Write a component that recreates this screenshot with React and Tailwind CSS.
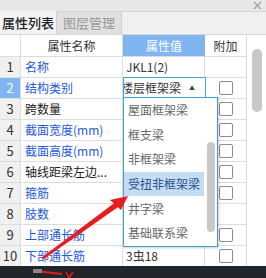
import React from "react";

const rows = [
  { n: "1", name: "名称", blue: true, val: "JKL1(2)", cb: false },
  { n: "2", name: "结构类别", blue: true, val: "", cb: true, sel: true },
  { n: "3", name: "跨数量", blue: false, val: "", cb: true },
  { n: "4", name: "截面宽度(mm)", blue: true, val: "", cb: true },
  { n: "5", name: "截面高度(mm)", blue: true, val: "", cb: true },
  { n: "6", name: "轴线距梁左边...", blue: false, val: "", cb: true },
  { n: "7", name: "箍筋", blue: true, val: "", cb: true },
  { n: "8", name: "肢数", blue: true, val: "", cb: false },
  { n: "9", name: "上部通长筋", blue: true, val: "", cb: true },
  { n: "10", name: "下部通长筋", blue: true, val: "3虫18", cb: true },
];

const items = ["屋面框架梁", "框支梁", "非框架梁", "受扭非框架梁", "井字梁", "基础联系梁"];

function Check() {
  return <div className="w-[14px] h-[14px] border border-[#8a8a8a] rounded-[2px] bg-white" />;
}

export default function App() {
  return (
    <div className="relative w-[266px] h-[278px] overflow-hidden bg-white text-[12px] text-[#333]" style={{ fontFamily: '"Noto Sans CJK SC", "Noto Sans", sans-serif' }}>
      {/* title bar */}
      <div className="h-[12px] bg-[#e8e8e8] border-b border-[#d4d4d4] flex justify-end items-center pr-[4px]">
        <svg width="9" height="9" viewBox="0 0 9 9"><path d="M1 1L8 8M8 1L1 8" stroke="#a0a0a0" strokeWidth="1.3" /></svg>
      </div>
      {/* tabs */}
      <div className="h-[23px] bg-[#f0f0f0] flex items-end border-b border-[#d6d6d6]">
        <div className="w-[57px] h-[23px] flex items-center justify-center bg-[#f3f3f3] border-r border-[#d0d0d0] text-[13px] text-[#222] font-medium">属性列表</div>
        <div className="w-[65px] h-[22px] flex items-center justify-center bg-[#e0e0e0] border-r border-[#d0d0d0] text-[13px] text-[#9a9a9a]">图层管理</div>
      </div>
      {/* grid */}
      <div className="flex">
        <div className="w-[247px]">
          <div className="flex h-[22px] border-b border-[#dcdcdc]">
            <div className="w-[21px] border-r border-[#dcdcdc]" />
            <div className="w-[102px] border-r border-[#dcdcdc] flex items-center justify-center text-[#333]">属性名称</div>
            <div className="w-[82px] bg-[#7fb6f2] flex items-center justify-center text-white">属性值</div>
            <div className="w-[42px] border-r border-[#dcdcdc] flex items-center justify-center text-[#333]">附加</div>
          </div>
          {rows.map((r) => (
            <div key={r.n} className="flex h-[21px] border-b border-[#dcdcdc]">
              <div className={`w-[21px] border-r border-[#dcdcdc] flex items-center justify-center text-[13px] ${r.sel ? "bg-[#7fb6f2] text-white" : "bg-[#f0f0f0] text-[#333]"}`}>{r.n}</div>
              <div className={`w-[102px] border-r border-[#dcdcdc] flex items-center pl-[4px] whitespace-nowrap ${r.blue ? "text-[#2557e0]" : "text-[#222]"}`}>{r.name}</div>
              <div className="w-[82px] border-r border-[#dcdcdc] flex items-center pl-[3px] text-[#333] whitespace-nowrap">{r.val}</div>
              <div className="w-[42px] border-r border-[#dcdcdc] flex items-center justify-center">{r.cb ? <Check /> : null}</div>
            </div>
          ))}
        </div>
        <div className="w-[19px] flex justify-center pt-[14px]">
          <div className="w-[10px] h-[63px] rounded-[5px] bg-[#c8c8c8]" />
        </div>
      </div>
      {/* bottom bar */}
      <div className="absolute left-0 bottom-0 w-full h-[12px] bg-[#222529]" />

      {/* combobox */}
      <div className="absolute left-[123px] top-[77px] w-[83px] h-[21px] border border-[#4ba3e3] bg-white flex items-center overflow-hidden text-[#333] whitespace-nowrap">
        <span className="ml-[-3px]">楼层框架梁</span>
        <span className="ml-[8px] text-[6px] text-[#444]">▲</span>
      </div>
      {/* dropdown list */}
      <div className="absolute left-[123px] top-[97px] w-[95px] h-[150px] border border-[#3fa0d8] bg-white shadow-[1px_1px_2px_rgba(0,0,0,0.2)] flex">
        <div className="w-[80px] flex flex-col">
          {items.map((it, i) => (
            <div key={it} className={`h-[24.6px] flex items-center pl-[4px] whitespace-nowrap ${i === 3 ? "bg-[#c4dcf4] text-[#2a4f8a]" : "text-[#666]"}`}>{it}</div>
          ))}
        </div>
        <div className="flex-1 flex justify-center pt-[44px]">
          <div className="w-[8px] h-[90px] rounded-[4px] bg-[#c8c8c8]" />
        </div>
      </div>

      {/* red arrow annotation */}
      <svg className="absolute left-0 top-0 pointer-events-none" width="266" height="278">
        <path d="M41 258 L44 259 L121 205 L117 201 Z" fill="#e41e1e" />
        <path d="M128 196 L110 200 L121 210 Z" fill="#e41e1e" />
        <path d="M36 271 L62 274" stroke="#e41e1e" strokeWidth="2" />
        <path d="M66 272 L69 278 L73 272" stroke="#e41e1e" strokeWidth="1.5" fill="none" />
        <rect x="33" y="269" width="9" height="4" fill="#888" />
      </svg>
    </div>
  );
}
